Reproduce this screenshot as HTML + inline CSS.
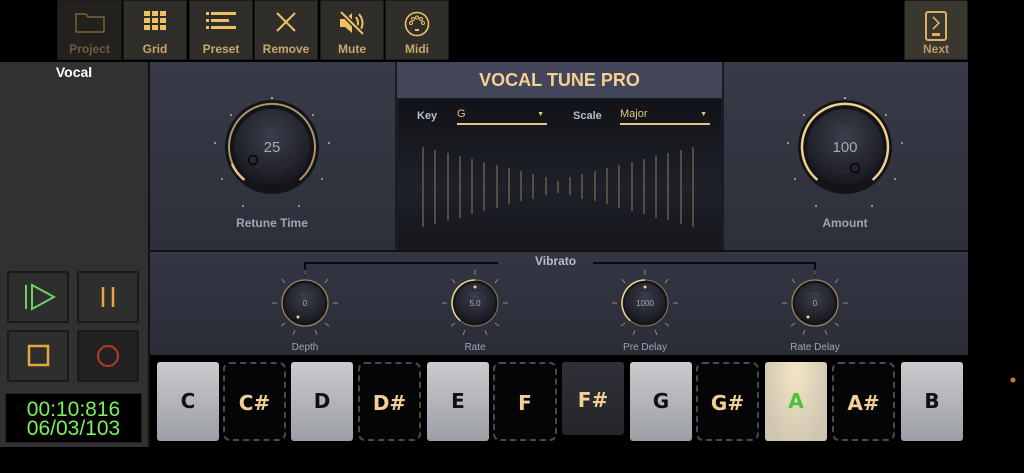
<!DOCTYPE html>
<html><head><meta charset="utf-8"><style>
*{margin:0;padding:0;box-sizing:border-box}
body{width:1024px;height:473px;background:#000;position:relative;overflow:hidden;font-family:"Liberation Sans","DejaVu Sans",sans-serif}
.a{position:absolute}
.tb{position:absolute;top:0;height:60px;background:#2f2e2b;border:1px solid #1a1a18;color:#c9a86a;font-weight:bold;font-size:12px;text-align:center}
.tb span{position:absolute;left:0;right:0;top:41px}
.tb svg{position:absolute;left:50%;top:10px;transform:translateX(-50%)}
.tr{position:absolute;width:62px;height:52px;background:#2e2e2e;border:2px solid #1a1a1a;border-radius:2px}
.key{position:absolute;top:362px;height:79px;width:62px;border-radius:3px;font-weight:bold;font-size:20px;text-align:center;line-height:79px;font-family:"DejaVu Sans",sans-serif}
.w{background:linear-gradient(#cbcbcd,#9c9ea6);color:#111}
.b{background:#050508;border:2px dashed #4a4a4e;color:#f1d096;border-radius:7px}
.lbl{position:absolute;font-size:11px;color:#a0a4b2;text-align:center;width:100px}
</style></head><body>
<div class="tb" style="left:57px;width:65px;background:#22211e"><svg width="30" height="22" viewBox="0 0 30 22"><path d="M1 3h10l2 3h16v15H1z" fill="none" stroke="#7a6238" stroke-width="1.5"/></svg><span style="color:#6e5e40">Project</span></div>
<div class="tb" style="left:123px;width:64px"><svg width="22" height="20" viewBox="0 0 22 20"><g fill="#efc163"><rect x="0" y="0" width="6" height="5"/><rect x="8" y="0" width="6" height="5"/><rect x="16" y="0" width="6" height="5"/><rect x="0" y="7" width="6" height="5"/><rect x="8" y="7" width="6" height="5"/><rect x="16" y="7" width="6" height="5"/><rect x="0" y="14" width="6" height="5"/><rect x="8" y="14" width="6" height="5"/><rect x="16" y="14" width="6" height="5"/></g></svg><span>Grid</span></div>
<div class="tb" style="left:189px;width:64px"><svg width="30" height="20" viewBox="0 0 30 20"><g fill="#efc163"><rect x="0" y="1" width="3" height="3"/><rect x="5" y="1" width="25" height="3"/><rect x="0" y="8" width="3" height="3"/><rect x="5" y="8" width="18" height="3"/><rect x="0" y="15" width="3" height="3"/><rect x="5" y="15" width="25" height="3"/></g></svg><span>Preset</span></div>
<div class="tb" style="left:254px;width:64px"><svg width="22" height="22" viewBox="0 0 22 22"><path d="M2 2L20 20M20 2L2 20" stroke="#efc163" stroke-width="2"/></svg><span>Remove</span></div>
<div class="tb" style="left:320px;width:64px"><svg width="28" height="24" viewBox="0 0 28 24"><path d="M2 8h5l7-6v20l-7-6H2z" fill="#efc163"/><path d="M18 6q4 6 0 12M21 3q7 9 0 18" fill="none" stroke="#efc163" stroke-width="2"/><path d="M3 1L25 23" stroke="#2f2e2b" stroke-width="5"/><path d="M3 1L25 23" stroke="#efc163" stroke-width="2"/></svg><span>Mute</span></div>
<div class="tb" style="left:385px;width:64px"><svg width="26" height="26" viewBox="0 0 26 26"><circle cx="13" cy="13" r="11.5" fill="none" stroke="#efc163" stroke-width="1.6"/><g fill="none" stroke="#efc163" stroke-width="1"><circle cx="7" cy="12" r="1.5"/><circle cx="9" cy="8" r="1.5"/><circle cx="13" cy="6.5" r="1.5"/><circle cx="17" cy="8" r="1.5"/><circle cx="19" cy="12" r="1.5"/></g><rect x="11" y="18" width="4" height="2" fill="#efc163"/></svg><span>Midi</span></div>
<div class="tb" style="left:904px;width:64px;background:#3a3630"><svg width="22" height="30" viewBox="0 0 22 30"><rect x="1" y="1" width="20" height="28" rx="2" fill="none" stroke="#e0b060" stroke-width="2"/><path d="M8 6l6 6-6 6" fill="none" stroke="#e0b060" stroke-width="1.6"/><rect x="7" y="22" width="8" height="3" fill="#e0b060"/></svg><span style="color:#b89a66">Next</span></div>

<div class="a" style="left:0;top:62px;width:148px;height:385px;background:#313131"></div>
<div class="a" style="left:0;width:148px;text-align:center;color:#fff;font-weight:bold;font-size:14px;top:64px">Vocal</div>
<div class="tr" style="left:7px;top:271px"><svg width="58" height="48"><path d="M17 12v24" stroke="#6fd06a" stroke-width="2"/><path d="M23 12l22 12-22 12z" fill="none" stroke="#6fd06a" stroke-width="2"/></svg></div>
<div class="tr" style="left:77px;top:271px"><svg width="58" height="48"><path d="M24 14v20M34 14v20" stroke="#e7a63c" stroke-width="2.5"/></svg></div>
<div class="tr" style="left:7px;top:330px"><svg width="58" height="48"><rect x="20" y="14" width="19" height="19" fill="none" stroke="#e7a63c" stroke-width="2.5"/></svg></div>
<div class="tr" style="left:77px;top:330px;background:#222"><svg width="58" height="48"><circle cx="29" cy="24" r="10" fill="none" stroke="#b83a24" stroke-width="2"/></svg></div>
<div class="a" style="left:5px;top:393px;width:137px;height:50px;background:#000;border:1px solid #222;color:#7cf05a;font-size:21px;line-height:19px;text-align:center;padding-top:6px">00:10:816<br>06/03/103</div>

<div class="a" style="left:148px;top:62px;width:2px;height:385px;background:#111"></div>
<div class="a" style="left:150px;top:62px;width:245px;height:188px;background:linear-gradient(#383a48,#2d2f3a)"></div>
<div class="a" style="left:724px;top:62px;width:244px;height:188px;background:linear-gradient(#383a48,#2d2f3a)"></div>
<div class="a" style="left:395px;top:62px;width:329px;height:188px;background:#1b1c22"></div>
<div class="a" style="left:397px;top:62px;width:325px;height:36px;background:#43455a;color:#f4d192;font-weight:bold;font-size:18px;text-align:center;line-height:37px">VOCAL TUNE PRO</div>
<div class="a" style="left:398px;top:100px;width:323px;height:148px;background:linear-gradient(#121318,#1e2029 60%,#15161b)"></div>
<div class="a" style="left:417px;top:110px;color:#b8bccb;font-weight:bold;font-size:11px">Key</div>
<div class="a" style="left:457px;top:108px;width:90px;height:17px;border-bottom:2px solid #e8c47c;color:#e8c47c;font-size:11px">G<span style="position:absolute;right:3px;top:3px;font-size:7px">▼</span></div>
<div class="a" style="left:573px;top:110px;color:#b8bccb;font-weight:bold;font-size:11px">Scale</div>
<div class="a" style="left:620px;top:108px;width:90px;height:17px;border-bottom:2px solid #e8c47c;color:#e8c47c;font-size:11px">Major<span style="position:absolute;right:3px;top:3px;font-size:7px">▼</span></div>
<svg class="a" style="left:0;top:0" width="1024" height="473">
<g stroke="#8a7a60" stroke-width="1.3" opacity="0.8">
<line x1="423" y1="147" x2="423" y2="227"/><line x1="435" y1="150" x2="435" y2="224"/><line x1="448" y1="153" x2="448" y2="220"/><line x1="460" y1="156" x2="460" y2="218"/><line x1="472" y1="159" x2="472" y2="214"/><line x1="484" y1="162" x2="484" y2="211"/><line x1="497" y1="165" x2="497" y2="208"/><line x1="509" y1="168" x2="509" y2="204"/><line x1="521" y1="171" x2="521" y2="201"/><line x1="533" y1="174" x2="533" y2="199"/><line x1="546" y1="177" x2="546" y2="195"/><line x1="558" y1="181" x2="558" y2="193"/><line x1="570" y1="177" x2="570" y2="195"/><line x1="582" y1="174" x2="582" y2="199"/><line x1="595" y1="171" x2="595" y2="201"/><line x1="607" y1="168" x2="607" y2="204"/><line x1="619" y1="165" x2="619" y2="208"/><line x1="632" y1="162" x2="632" y2="211"/><line x1="644" y1="159" x2="644" y2="214"/><line x1="656" y1="156" x2="656" y2="218"/><line x1="668" y1="153" x2="668" y2="220"/><line x1="681" y1="150" x2="681" y2="224"/><line x1="693" y1="147" x2="693" y2="227"/>
</g>
</svg>

<div class="a" style="left:150px;top:250px;width:818px;height:2px;background:#111"></div>
<div class="a" style="left:150px;top:252px;width:818px;height:103px;background:linear-gradient(#343644,#2a2c37)"></div>
<div class="a" style="left:535px;top:254px;color:#b8bccb;font-weight:bold;font-size:12px">Vibrato</div>
<svg class="a" style="left:0;top:0" width="1024" height="473">
<path d="M305 276V263H498M593 263H815V276" fill="none" stroke="#08090c" stroke-width="2"/>
<defs>
<radialGradient id="kg" cx="50%" cy="35%" r="65%"><stop offset="0" stop-color="#3c3e4c"/><stop offset="1" stop-color="#17181f"/></radialGradient>
</defs>
<g transform="translate(272,147)">
<circle r="47" fill="#13141a"/>
<path d="M-27.6 32.9A43 43 0 1 1 27.6 32.9" fill="none" stroke="#b09568" stroke-width="2"/>
<path d="M-27.6 32.9A43 43 0 0 1 -40 17" fill="none" stroke="#e8c47c" stroke-width="2.5"/>
<circle r="38" fill="url(#kg)"/>
<circle r="24" fill="none" stroke="#2a2c36" stroke-width="1"/>
<circle cx="-19" cy="13" r="4.5" fill="none" stroke="#000" stroke-width="1.3"/>
<text y="5" text-anchor="middle" font-size="15" fill="#a6a9b6" font-family="Liberation Sans">25</text>
<g fill="#c8b080"><circle cx="-41" cy="-32" r="1"/><circle cx="-57" cy="-4" r="1"/><circle cx="-50" cy="32" r="1"/><circle cx="-29" cy="59" r="1"/><circle cx="41" cy="-32" r="1"/><circle cx="57" cy="-4" r="1"/><circle cx="50" cy="32" r="1"/><circle cx="27" cy="59" r="1"/></g>
<circle cx="0" cy="-49" r="1" fill="#ccc"/>
</g>
<g transform="translate(845,147)">
<circle r="47" fill="#13141a"/>
<path d="M-27.6 32.9A43 43 0 1 1 27.6 32.9" fill="none" stroke="#f2cf8a" stroke-width="2.5"/>
<circle r="38" fill="url(#kg)"/>
<circle r="25" fill="none" stroke="#2a2c36" stroke-width="1"/>
<circle cx="10" cy="21" r="4.5" fill="none" stroke="#000" stroke-width="1.3"/>
<text y="5" text-anchor="middle" font-size="15" fill="#a6a9b6" font-family="Liberation Sans">100</text>
<g fill="#c8b080"><circle cx="-41" cy="-32" r="1"/><circle cx="-57" cy="-4" r="1"/><circle cx="-50" cy="32" r="1"/><circle cx="-29" cy="59" r="1"/><circle cx="41" cy="-32" r="1"/><circle cx="57" cy="-4" r="1"/><circle cx="50" cy="32" r="1"/><circle cx="27" cy="59" r="1"/></g>
<circle cx="0" cy="-49" r="1" fill="#ccc"/>
</g>
<g transform="translate(305,303)">
<g stroke="#9a8a6a" stroke-width="1"><line x1="0" y1="-28" x2="0" y2="-33"/><line x1="-20" y1="-20" x2="-23" y2="-24"/><line x1="20" y1="-20" x2="23" y2="-24"/><line x1="-28" y1="0" x2="-33" y2="0"/><line x1="28" y1="0" x2="33" y2="0"/><line x1="-20" y1="20" x2="-24" y2="23"/><line x1="20" y1="20" x2="24" y2="23"/><line x1="-10" y1="27" x2="-12" y2="32"/><line x1="10" y1="27" x2="12" y2="32"/></g>
<circle r="23" fill="#15161c" stroke="#9a8560" stroke-width="1.3"/>
<circle r="20" fill="url(#kg)"/>
<circle r="13" fill="none" stroke="#262833"/>
<circle cx="-7" cy="14" r="1.5" fill="#f0d090"/>
<text y="3" text-anchor="middle" font-size="8" fill="#a6a9b6" font-family="Liberation Sans">0</text>
</g>
<g transform="translate(475,303)">
<g stroke="#9a8a6a" stroke-width="1"><line x1="0" y1="-28" x2="0" y2="-33"/><line x1="-20" y1="-20" x2="-23" y2="-24"/><line x1="20" y1="-20" x2="23" y2="-24"/><line x1="-28" y1="0" x2="-33" y2="0"/><line x1="28" y1="0" x2="33" y2="0"/><line x1="-20" y1="20" x2="-24" y2="23"/><line x1="20" y1="20" x2="24" y2="23"/><line x1="-10" y1="27" x2="-12" y2="32"/><line x1="10" y1="27" x2="12" y2="32"/></g>
<circle r="23" fill="#15161c" stroke="#8a7a5a" stroke-width="1"/>
<path d="M-14.8 17.6A23 23 0 0 1 0 -23" fill="none" stroke="#f0d090" stroke-width="1.6"/>
<circle r="20" fill="url(#kg)"/>
<circle r="13" fill="none" stroke="#262833"/>
<circle cx="0" cy="-16" r="1.5" fill="#f0d090"/>
<text y="3" text-anchor="middle" font-size="8" fill="#a6a9b6" font-family="Liberation Sans">5.0</text>
</g>
<g transform="translate(645,303)">
<g stroke="#9a8a6a" stroke-width="1"><line x1="0" y1="-28" x2="0" y2="-33"/><line x1="-20" y1="-20" x2="-23" y2="-24"/><line x1="20" y1="-20" x2="23" y2="-24"/><line x1="-28" y1="0" x2="-33" y2="0"/><line x1="28" y1="0" x2="33" y2="0"/><line x1="-20" y1="20" x2="-24" y2="23"/><line x1="20" y1="20" x2="24" y2="23"/><line x1="-10" y1="27" x2="-12" y2="32"/><line x1="10" y1="27" x2="12" y2="32"/></g>
<circle r="23" fill="#15161c" stroke="#8a7a5a" stroke-width="1"/>
<path d="M-14.8 17.6A23 23 0 0 1 0 -23" fill="none" stroke="#f0d090" stroke-width="1.6"/>
<circle r="20" fill="url(#kg)"/>
<circle r="13" fill="none" stroke="#262833"/>
<circle cx="0" cy="-16" r="1.5" fill="#f0d090"/>
<text y="3" text-anchor="middle" font-size="8" fill="#a6a9b6" font-family="Liberation Sans">1000</text>
</g>
<g transform="translate(815,303)">
<g stroke="#9a8a6a" stroke-width="1"><line x1="0" y1="-28" x2="0" y2="-33"/><line x1="-20" y1="-20" x2="-23" y2="-24"/><line x1="20" y1="-20" x2="23" y2="-24"/><line x1="-28" y1="0" x2="-33" y2="0"/><line x1="28" y1="0" x2="33" y2="0"/><line x1="-20" y1="20" x2="-24" y2="23"/><line x1="20" y1="20" x2="24" y2="23"/><line x1="-10" y1="27" x2="-12" y2="32"/><line x1="10" y1="27" x2="12" y2="32"/></g>
<circle r="23" fill="#15161c" stroke="#9a8560" stroke-width="1.3"/>
<circle r="20" fill="url(#kg)"/>
<circle r="13" fill="none" stroke="#262833"/>
<circle cx="-7" cy="14" r="1.5" fill="#f0d090"/>
<text y="3" text-anchor="middle" font-size="8" fill="#a6a9b6" font-family="Liberation Sans">0</text>
</g>
<circle cx="1013" cy="380" r="2.5" fill="#d07a20"/>
</svg>
<div class="lbl" style="left:222px;top:216px;font-weight:bold;font-size:12px">Retune Time</div>
<div class="lbl" style="left:795px;top:216px;font-weight:bold;font-size:12px">Amount</div>
<div class="lbl" style="left:255px;top:342px;font-size:10px">Depth</div>
<div class="lbl" style="left:425px;top:342px;font-size:10px">Rate</div>
<div class="lbl" style="left:595px;top:342px;font-size:10px">Pre Delay</div>
<div class="lbl" style="left:765px;top:342px;font-size:10px">Rate Delay</div>

<div class="key w" style="left:157px">C</div>
<div class="key b" style="left:223px;width:63px">C#</div>
<div class="key w" style="left:291px">D</div>
<div class="key b" style="left:358px;width:63px">D#</div>
<div class="key w" style="left:427px">E</div>
<div class="key b" style="left:493px;width:64px">F</div>
<div class="key" style="left:562px;top:362px;height:73px;line-height:76px;background:linear-gradient(#303138,#24252b);color:#f1d096">F#</div>
<div class="key w" style="left:630px">G</div>
<div class="key b" style="left:696px;width:63px">G#</div>
<div class="key" style="left:765px;background:radial-gradient(ellipse at 50% 10%,#f3e6c4,#cfc6b2 80%);color:#4cc23c">A</div>
<div class="key b" style="left:832px;width:63px">A#</div>
<div class="key w" style="left:901px">B</div>
</body></html>
